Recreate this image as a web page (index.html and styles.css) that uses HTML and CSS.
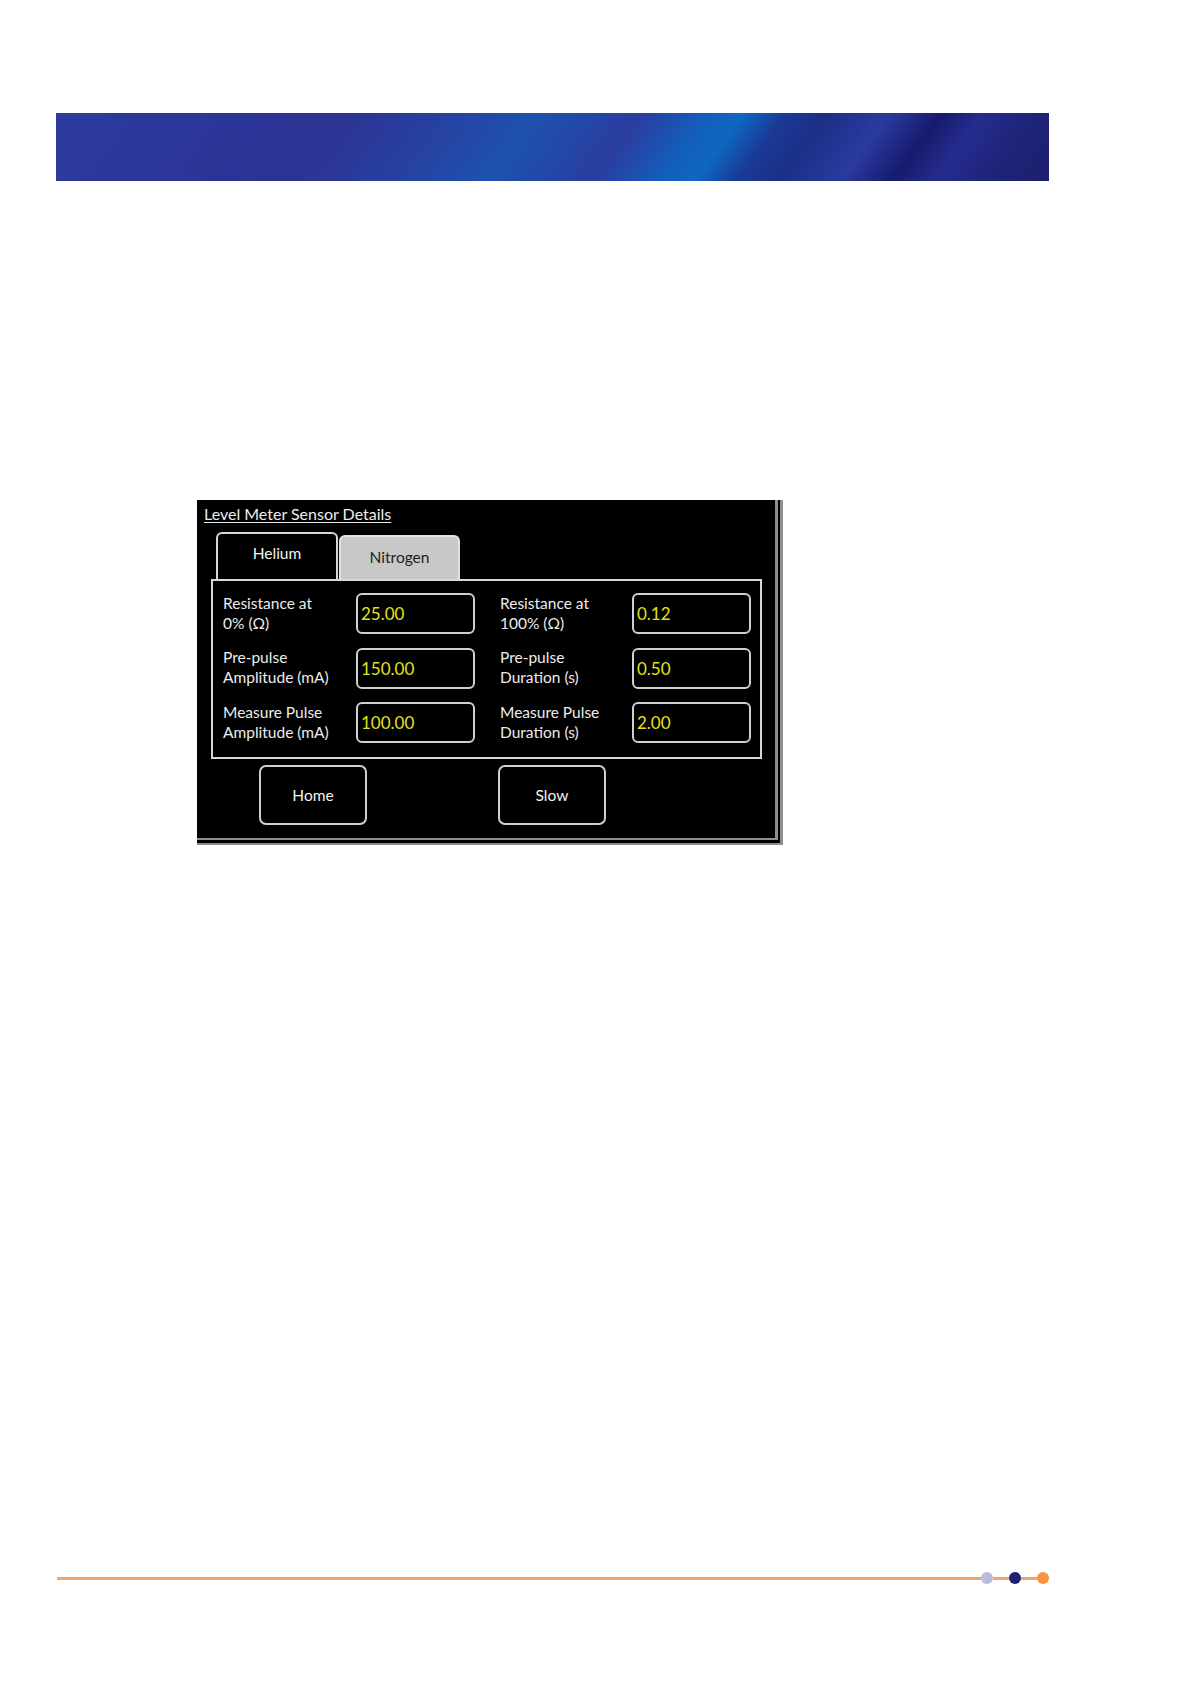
FILE: index.html
```html
<!DOCTYPE html>
<html>
<head>
<meta charset="utf-8">
<title>Level Meter Sensor Details</title>
<link rel="stylesheet" href="styles.css">
</head>
<body>
<div class="page">
  <div class="banner"></div>

  <div class="panel">
    <div class="title">Level Meter Sensor Details</div>
    <div class="tabs">
      <div class="tab active">Helium</div>
      <div class="tab inactive">Nitrogen</div>
    </div>
    <div class="box">
      <div class="pair">
        <div class="label">Resistance at<br>0% (Ω)</div>
        <div class="field">25.00</div>
      </div>
      <div class="pair">
        <div class="label">Resistance at<br>100% (Ω)</div>
        <div class="field">0.12</div>
      </div>
      <div class="pair">
        <div class="label">Pre-pulse<br>Amplitude (mA)</div>
        <div class="field">150.00</div>
      </div>
      <div class="pair">
        <div class="label">Pre-pulse<br>Duration (s)</div>
        <div class="field">0.50</div>
      </div>
      <div class="pair">
        <div class="label">Measure Pulse<br>Amplitude (mA)</div>
        <div class="field">100.00</div>
      </div>
      <div class="pair">
        <div class="label">Measure Pulse<br>Duration (s)</div>
        <div class="field">2.00</div>
      </div>
    </div>
    <div class="buttons">
      <div class="btn">Home</div>
      <div class="btn">Slow</div>
    </div>
  </div>

  <div class="footer">
    <div class="seg long"></div>
    <div class="dot light"></div>
    <div class="seg short"></div>
    <div class="dot navy"></div>
    <div class="seg short"></div>
    <div class="dot orange"></div>
  </div>
</div>
</body>
</html>
```
FILE: styles.css
```css
html, body {
  margin: 0;
  padding: 0;
  background: #ffffff;
}

.page {
  width: 1190px;
  height: 1684px;
  display: flex;
  flex-direction: column;
  align-items: flex-start;
  font-family: Lato, "Open Sans", "Liberation Sans", sans-serif;
}

.banner {
  margin-top: 113px;
  margin-left: 56px;
  width: 993px;
  height: 68px;
  background:
    linear-gradient(126deg,
      #2c3c9e 0%,
      #2b3597 18%,
      #2d3394 28%,
      #2642a2 38%,
      #1d52ae 46%,
      #2446a6 52%,
      #2b3c9f 56%,
      #1260bd 63%,
      #0e67c2 66%,
      #1a3a96 70%,
      #1c2f86 74%,
      #2b3aa0 80%,
      #161b6c 85%,
      #262c8e 89%,
      #1e2478 94%,
      #1b1f6c 100%);
}

.panel {
  margin-top: 319px;
  margin-left: 197px;
  width: 578px;
  height: 338px;
  background: #000000;
  border-right: 8px double #8e8e8e;
  border-bottom: 7px double #8e8e8e;
  display: flex;
  flex-direction: column;
  align-items: flex-start;
  color: #e8e8e8;
}

.title {
  margin-top: 4px;
  margin-left: 7px;
  font-size: 16px;
  line-height: 20px;
  text-decoration: underline;
  text-underline-offset: 2px;
  color: #ececec;
}

.tabs {
  margin-top: 8px;
  margin-left: 19px;
  display: flex;
  align-items: flex-end;
  gap: 1px;
}

.tab {
  box-sizing: border-box;
  width: 122px;
  font-size: 15.5px;
  display: flex;
  justify-content: center;
  border: 2px solid #d6d6d6;
  border-bottom: none;
  border-radius: 6px 6px 0 0;
}

.tab.active {
  height: 47px;
  padding-top: 10px;
  background: #000000;
  color: #f2f2f2;
}

.tab.inactive {
  width: 121px;
  height: 44px;
  padding-top: 11px;
  background: #c8c8c8;
  border-color: #e2e2e2;
  color: #1e1e1e;
}

.box {
  box-sizing: border-box;
  margin-left: 14px;
  width: 551px;
  height: 180px;
  border: 2px solid #d8d8d8;
  padding: 12px 9px 14px 10px;
  display: grid;
  grid-template-columns: 252px 251px;
  column-gap: 25px;
  row-gap: 13.5px;
}

.pair {
  display: flex;
  align-items: center;
  height: 41px;
}

.label {
  width: 133px;
  margin-top: -2px;
  font-size: 15.5px;
  line-height: 20px;
  color: #ececec;
}

.pair:nth-child(even) .label {
  width: 132px;
}

.field {
  box-sizing: border-box;
  width: 119px;
  height: 41px;
  border: 2px solid #cfcfcf;
  border-radius: 6px;
  padding-left: 3px;
  display: flex;
  align-items: center;
  font-size: 17px;
  color: #e2e21c;
}

.buttons {
  margin-top: 6px;
  margin-left: 62px;
  display: flex;
  gap: 131px;
}

.btn {
  box-sizing: border-box;
  width: 108px;
  height: 60px;
  border: 2px solid #cfcfcf;
  border-radius: 7px;
  display: flex;
  align-items: center;
  justify-content: center;
  font-size: 15.5px;
  color: #f2f2f2;
}

.footer {
  margin-top: 727px;
  margin-left: 57px;
  width: 992px;
  height: 12px;
  display: flex;
  align-items: center;
}

.seg {
  height: 3px;
  background: #f5a467;
}

.seg.long {
  flex: 1;
}

.seg.short {
  width: 16px;
}

.dot {
  width: 12px;
  height: 12px;
  border-radius: 50%;
  flex: none;
}

.dot.light {
  background: #b8bcd7;
}

.dot.navy {
  background: #1d2171;
}

.dot.orange {
  background: #f7953f;
}
```
